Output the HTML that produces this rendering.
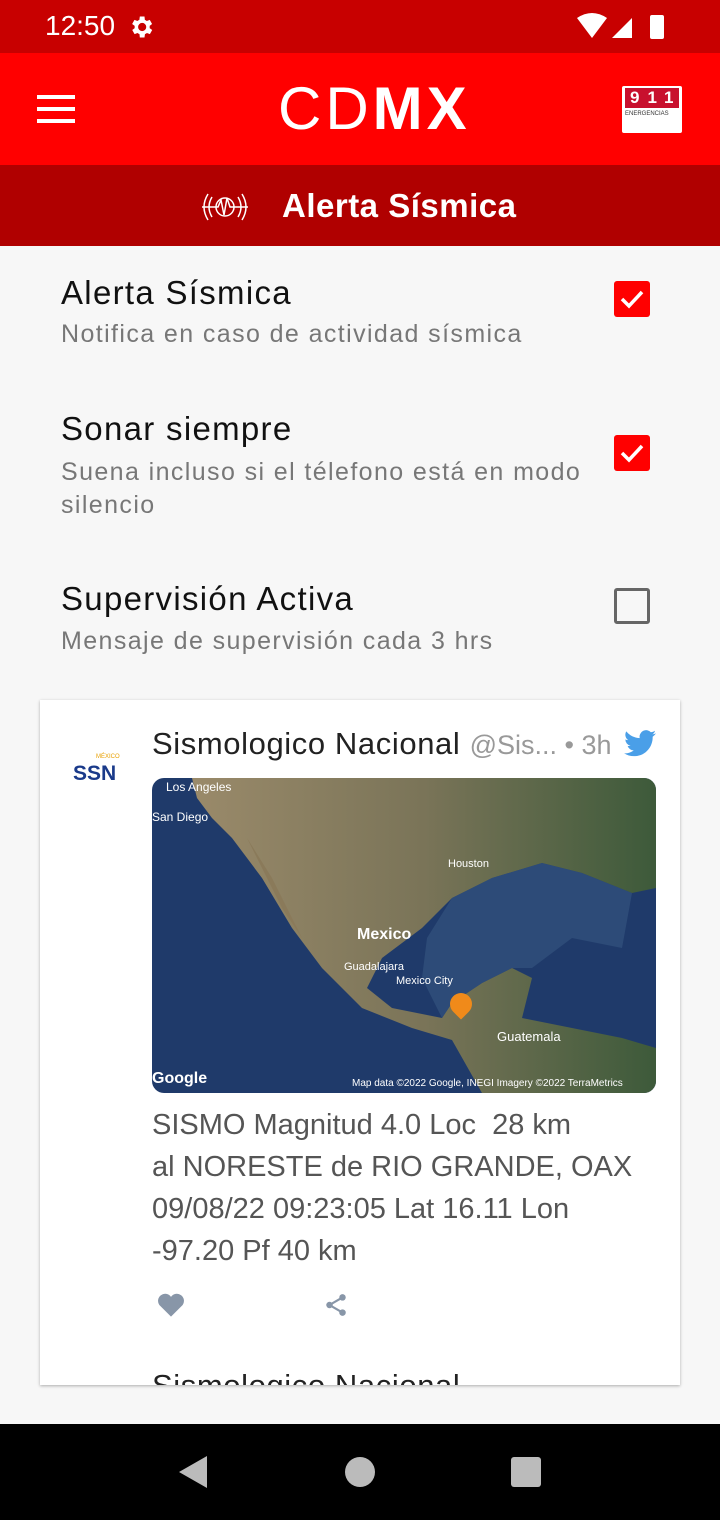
<!DOCTYPE html>
<html><head><meta charset="utf-8"><style>
*{margin:0;padding:0;box-sizing:border-box}
body{width:720px;height:1520px;background:#f7f7f7;font-family:"Liberation Sans",sans-serif;position:relative;overflow:hidden}
.abs{position:absolute}
.t{font-size:33px;color:#111;letter-spacing:1.3px}
.s{font-size:25px;color:#777;letter-spacing:1.4px}
.cb{position:absolute;left:614px;width:36px;height:36px;border-radius:3px}
.on{background:#f00}
.off{border:3px solid #666}
</style></head><body>
<div class="abs" style="left:0;top:0;width:720px;height:53px;background:#c80000"></div>
<div class="abs" style="left:45px;top:10px;color:#fff;font-size:28px">12:50</div>
<svg class="abs" style="left:127px;top:13px" width="28" height="28" viewBox="0 0 24 24"><path fill="#fff" d="M19.4 13a7.5 7.5 0 0 0 0-2l2.1-1.6-2-3.5-2.5 1a7 7 0 0 0-1.7-1L15 3h-4l-.4 2.9a7 7 0 0 0-1.7 1l-2.5-1-2 3.5L6.6 11a7.5 7.5 0 0 0 0 2l-2.1 1.6 2 3.5 2.5-1a7 7 0 0 0 1.700 1L11 21h4l.4-2.9a7 7 0 0 0 1.7-1l2.5 1 2-3.5zM13 15.5A3.5 3.5 0 1 1 13 8.5a3.5 3.5 0 0 1 0 7z"/></svg>
<svg class="abs" style="left:575px;top:12px" width="95" height="30" viewBox="0 0 95 30"><path fill="#fff" d="M2 6 Q17 -4 32 6 L17 26Z"/><path fill="#fff" d="M37 26 L57 6 V26Z"/><rect x="75" y="3" width="14" height="24" rx="2" fill="#fff"/></svg>
<div class="abs" style="left:0;top:53px;width:720px;height:112px;background:#f00"></div>
<div class="abs" style="left:37px;top:95px;width:38px;height:4px;background:#fff;box-shadow:0 12px 0 #fff,0 24px 0 #fff"></div>
<div class="abs" style="left:278px;top:76px;color:#fff;font-size:60px;line-height:66px;letter-spacing:4px"><span style="font-weight:300">CD</span><b>MX</b></div>
<div class="abs" style="left:622px;top:86px;width:60px;height:47px;background:#fff;border-radius:2px"></div>
<div class="abs" style="left:625px;top:88px;width:54px;height:20px;background:#c8102e;color:#fff;font-weight:bold;font-size:17px;letter-spacing:8px;padding-left:5px;line-height:20px">911</div>
<div class="abs" style="left:625px;top:111px;font-size:6px;color:#333">ENERGENCIAS</div>
<div class="abs" style="left:0;top:165px;width:720px;height:81px;background:#b00000"></div>
<svg class="abs" style="left:200px;top:190px" width="50" height="34" viewBox="0 0 50 34"><g fill="none" stroke="#fff" stroke-width="1.5"><path d="M8 4Q0 17 8 30M12 7Q6 17 12 27M42 4Q50 17 42 30M38 7Q44 17 38 27"/><circle cx="25" cy="17" r="9"/><path d="M2 17H18L21 10 24 25 27 8 30 17H48"/></g></svg>
<div class="abs" style="left:282px;top:187px;color:#fff;font-size:33px;font-weight:bold;letter-spacing:.5px">Alerta Sísmica</div>

<div class="abs t" style="left:61px;top:274px">Alerta Sísmica</div>
<div class="abs s" style="left:61px;top:320px">Notifica en caso de actividad sísmica</div>
<div class="cb on" style="top:281px"><svg width="36" height="36"><path d="M8 18l7 7 13-14" stroke="#fff" stroke-width="3.5" fill="none"/></svg></div>
<div class="abs t" style="left:61px;top:410px">Sonar siempre</div>
<div class="abs s" style="left:61px;top:456px;line-height:33px;width:540px">Suena incluso si el télefono está en modo silencio</div>
<div class="cb on" style="top:435px"><svg width="36" height="36"><path d="M8 18l7 7 13-14" stroke="#fff" stroke-width="3.5" fill="none"/></svg></div>
<div class="abs t" style="left:61px;top:580px">Supervisión Activa</div>
<div class="abs s" style="left:61px;top:627px">Mensaje de supervisión cada 3 hrs</div>
<div class="cb off" style="top:588px"></div>

<div class="abs" style="left:40px;top:700px;width:640px;height:685px;background:#fff;box-shadow:0 1px 3px rgba(0,0,0,.3);overflow:hidden">
<div class="abs" style="left:33px;top:62px;color:#1a3a8a;font-weight:bold;font-size:21px">SSN</div>
<div class="abs" style="left:56px;top:54px;color:#e8a000;font-size:6px">MÉXICO</div>
<div class="abs" style="left:112px;top:26px;font-size:31px;color:#222;letter-spacing:.6px;white-space:nowrap">Sismologico Nacional <span style="color:#999;font-size:27px;font-weight:300;letter-spacing:0">@Sis... • 3h</span></div>
<svg class="abs" style="left:584px;top:30px" width="32" height="27" viewBox="0 0 24 20"><path fill="#4a9fe8" d="M24 2.4a10 10 0 0 1-2.8.8A5 5 0 0 0 23.3.4a10 10 0 0 1-3.1 1.2A4.9 4.9 0 0 0 11.8 6 14 14 0 0 1 1.7.9a4.9 4.9 0 0 0 1.5 6.6A4.9 4.9 0 0 1 1 6.9a4.9 4.9 0 0 0 3.9 4.8 5 5 0 0 1-2.2.1 4.9 4.9 0 0 0 4.6 3.4A9.9 9.9 0 0 1 0 17.3 14 14 0 0 0 7.5 19.5c9.1 0 14-7.5 14-14v-.6A10 10 0 0 0 24 2.4z"/></svg>
<div class="abs" style="left:112px;top:78px;width:504px;height:315px;border-radius:12px;overflow:hidden;background:#1f3a6a">
<svg width="504" height="315" viewBox="0 0 504 315"><defs><linearGradient id="g" x1="0" x2="1"><stop offset="0" stop-color="#9a8a6a"/><stop offset=".5" stop-color="#7a7458"/><stop offset="1" stop-color="#3d5a3a"/></linearGradient></defs>
<path fill="url(#g)" d="M40 0H504V110L480 115 430 95 390 85 340 100 300 120 270 150 230 180 215 210 240 230 290 240 300 225 330 205 360 190 380 200 370 240 420 250 470 260 504 270V315H330L300 262 260 250 210 230 170 190 140 150 110 100 80 60 60 40 45 20Z"/>
<path fill="#8a7a5a" d="M95 60L110 90 130 130 150 160 140 140 120 100Z"/>
<path fill="#304f7a" d="M300 120 340 100 390 85 430 95 480 115 470 170 420 160 380 190 360 190 330 205 300 225 290 240 270 200 275 160Z" opacity=".85"/>
</svg>
<div class="abs" style="left:14px;top:2px;color:#fff;font-size:12px">Los Angeles</div>
<div class="abs" style="left:0;top:32px;color:#fff;font-size:12px">San Diego</div>
<div class="abs" style="left:205px;top:148px;color:#fff;font-size:16px;font-weight:bold">Mexico</div>
<div class="abs" style="left:192px;top:183px;color:#fff;font-size:11px">Guadalajara</div>
<div class="abs" style="left:244px;top:197px;color:#fff;font-size:11px">Mexico City</div>
<div class="abs" style="left:298px;top:215px;width:22px;height:22px;border-radius:50% 50% 50% 0;transform:rotate(-45deg);background:#f08a1a"></div>
<div class="abs" style="left:345px;top:251px;color:#fff;font-size:13px">Guatemala</div>
<div class="abs" style="left:296px;top:80px;color:#fff;font-size:11px">Houston</div>
<div class="abs" style="left:0;top:292px;color:#fff;font-size:16px;font-weight:bold">Google</div>
<div class="abs" style="left:200px;top:300px;color:#fff;font-size:10px">Map data ©2022 Google, INEGI Imagery ©2022 TerraMetrics</div>
</div>
<div class="abs" style="left:112px;top:404px;white-space:nowrap;font-size:29px;line-height:42px;color:#555;font-weight:300">SISMO Magnitud 4.0 Loc&nbsp; 28 km<br>al NORESTE de RIO GRANDE, OAX<br>09/08/22 09:23:05 Lat 16.11 Lon<br>-97.20 Pf 40 km</div>
<svg class="abs" style="left:117px;top:592px" width="28" height="26" viewBox="0 0 24 22"><path fill="#8896a8" d="M12 21 2 11A5.5 5.5 0 0 1 12 4a5.5 5.5 0 0 1 10 7z"/></svg>
<svg class="abs" style="left:283px;top:591px" width="26" height="28" viewBox="0 0 24 24"><g fill="#8896a8"><circle cx="18" cy="5" r="3"/><circle cx="6" cy="12" r="3"/><circle cx="18" cy="19" r="3"/></g><path d="M18 5 6 12 18 19" stroke="#8896a8" stroke-width="2" fill="none"/></svg>
<div class="abs" style="left:112px;top:668px;font-size:31px;color:#222;letter-spacing:.6px">Sismologico Nacional</div>
</div>

<div class="abs" style="left:0;top:1424px;width:720px;height:96px;background:#000"></div>
<svg class="abs" style="left:175px;top:1452px" width="40" height="40"><path d="M32 4V36L4 20Z" fill="#bbb"/></svg>
<div class="abs" style="left:345px;top:1457px;width:30px;height:30px;border-radius:50%;background:#bbb"></div>
<div class="abs" style="left:511px;top:1457px;width:30px;height:30px;border-radius:3px;background:#bbb"></div>
</body></html>
